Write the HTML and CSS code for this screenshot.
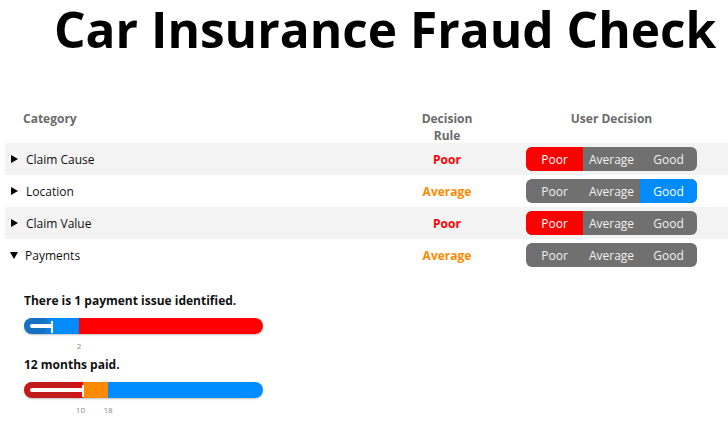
FILE: index.html
```html
<!DOCTYPE html>
<html>
<head>
<meta charset="utf-8">
<link rel="stylesheet" href="styles.css">
</head>
<body>
<h1 class="title">Car Insurance Fraud Check</h1>
<div class="table">
  <div class="row head">
    <div class="c-cat">Category</div>
    <div class="c-rule">Decision<br>Rule</div>
    <div class="c-user">User Decision</div>
  </div>
  <div class="row shaded">
    <div class="c-cat"><span class="tri right"></span>Claim Cause</div>
    <div class="c-rule poor">Poor</div>
    <div class="c-user"><div class="seg"><span class="opt sel-poor">Poor</span><span class="opt">Average</span><span class="opt">Good</span></div></div>
  </div>
  <div class="row">
    <div class="c-cat"><span class="tri right"></span>Location</div>
    <div class="c-rule avg">Average</div>
    <div class="c-user"><div class="seg"><span class="opt">Poor</span><span class="opt">Average</span><span class="opt sel-good">Good</span></div></div>
  </div>
  <div class="row shaded">
    <div class="c-cat"><span class="tri right"></span>Claim Value</div>
    <div class="c-rule poor">Poor</div>
    <div class="c-user"><div class="seg"><span class="opt sel-poor">Poor</span><span class="opt">Average</span><span class="opt">Good</span></div></div>
  </div>
  <div class="row">
    <div class="c-cat"><span class="tri down"></span>Payments</div>
    <div class="c-rule avg">Average</div>
    <div class="c-user"><div class="seg"><span class="opt">Poor</span><span class="opt">Average</span><span class="opt">Good</span></div></div>
  </div>
</div>
<div class="details">
  <div class="metric">
    <p class="msg">There is 1 payment issue identified.</p>
    <div class="track">
      <div class="bar">
        <div class="part blue" style="width:23%"></div>
        <div class="part red" style="flex:1"></div>
      </div>
      <div class="ind blue-ind" style="width:11.7%"><div class="line"></div><div class="marker"></div></div>
    </div>
    <div class="ticks"><span class="tick" style="left:23%">2</span></div>
  </div>
  <div class="metric">
    <p class="msg">12 months paid.</p>
    <div class="track">
      <div class="bar">
        <div class="part red" style="width:24.7%"></div>
        <div class="part orange" style="width:10.5%"></div>
        <div class="part blue" style="flex:1"></div>
      </div>
      <div class="ind red-ind" style="width:24.7%"><div class="line"></div><div class="marker"></div></div>
    </div>
    <div class="ticks"><span class="tick" style="left:23.6%">10</span><span class="tick" style="left:35.2%">18</span></div>
  </div>
</div>
</body>
</html>
```
FILE: styles.css
```css
html, body {
  margin: 0;
  padding: 0;
  background: #fff;
  font-family: "Open Sans", "Liberation Sans", sans-serif;
  color: #111;
}
.title {
  margin: 0;
  padding-left: 54px;
  font-size: 49.6px;
  line-height: 58px;
  font-weight: 700;
  white-space: nowrap;
  color: #000;
}
.table {
  margin: 51px 0 0 5px;
  width: 723px;
}
.row {
  display: flex;
  align-items: center;
  height: 32px;
  font-size: 12px;
}
.row.shaded { background: #f3f3f3; }
.row.head {
  height: 34px;
  box-sizing: border-box;
  padding-top: 1px;
  align-items: flex-start;
  font-weight: 700;
  color: #6b6b6b;
  line-height: 17px;
}
.c-cat {
  width: 380px;
  display: flex;
  align-items: center;
}
.head .c-cat { padding-left: 18px; box-sizing: border-box; }
.c-rule {
  width: 124px;
  text-align: center;
}
.c-user {
  width: 205px;
  display: flex;
  justify-content: center;
}
.tri {
  width: 0;
  height: 0;
}
.tri.right {
  margin-left: 6px;
  margin-right: 8px;
  border-left: 7px solid #000;
  border-top: 4.5px solid transparent;
  border-bottom: 4.5px solid transparent;
}
.tri.down {
  margin-left: 5px;
  margin-right: 7px;
  border-top: 7px solid #000;
  border-left: 4.5px solid transparent;
  border-right: 4.5px solid transparent;
}
.poor { color: #ff0000; font-weight: 700; }
.avg { color: #ff8a00; font-weight: 700; }
.seg {
  display: flex;
  width: 171px;
  height: 24px;
  border-radius: 6px;
  overflow: hidden;
  background: #707070;
}
.opt {
  flex: 1;
  display: flex;
  align-items: center;
  justify-content: center;
  color: #f0f0f0;
  font-size: 12px;
}
.sel-poor { background: #ff0000; color: #fff; }
.sel-good { background: #008cff; color: #fff; }
.details {
  padding: 21px 0 0 24px;
}
.msg {
  margin: 0;
  font-size: 12px;
  line-height: 17px;
  font-weight: 700;
  color: #111;
}
.track {
  position: relative;
  width: 239px;
  height: 16px;
  margin-top: 9px;
  border-radius: 8px;
  box-shadow: 0 1px 2px rgba(0,0,0,0.25);
}
.bar {
  display: flex;
  width: 100%;
  height: 100%;
  border-radius: 8px;
  overflow: hidden;
}
.part { height: 100%; }
.blue { background: #008cff; }
.red { background: #ff0000; }
.orange { background: #ff8a00; }
.ind {
  position: absolute;
  left: 0;
  top: 0;
  bottom: 0;
  border-radius: 8px 0 0 8px;
}
.blue-ind { background: linear-gradient(to right, rgba(40,90,140,0.55) 70%, rgba(40,90,140,0)); }
.red-ind { background: linear-gradient(to right, rgba(120,60,60,0.45) 80%, rgba(120,60,60,0.2)); }
.line {
  position: absolute;
  left: 6px;
  right: 0;
  top: 6px;
  height: 4px;
  background: #fff;
  border-radius: 2px 0 0 2px;
}
.marker {
  position: absolute;
  right: -1px;
  top: 3px;
  bottom: 1px;
  width: 2px;
  background: #fff;
}
.ticks {
  position: relative;
  width: 239px;
  height: 22px;
  font-size: 8px;
  color: #888;
}
.tick {
  position: absolute;
  top: 7px;
  transform: translateX(-50%);
  line-height: 9px;
}
```
